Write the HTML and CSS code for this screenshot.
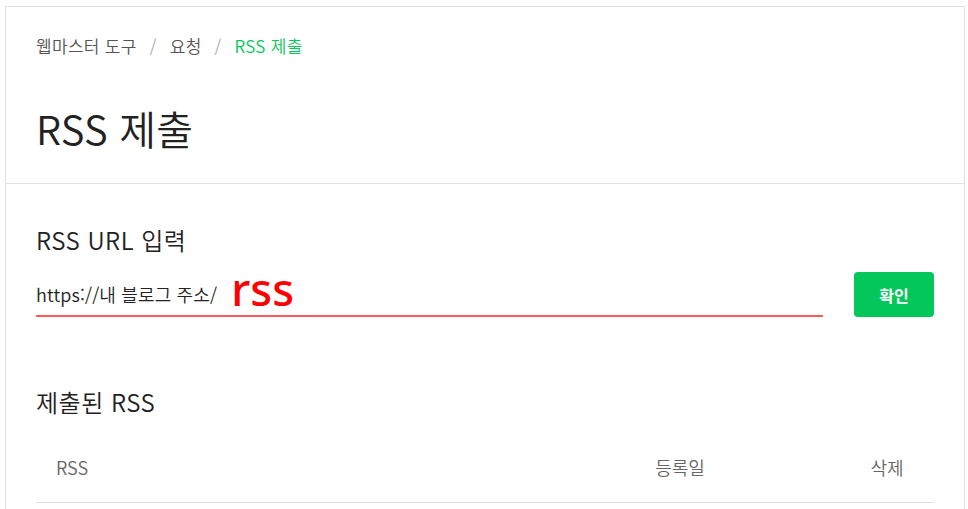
FILE: index.html
```html
<!DOCTYPE html>
<html lang="ko">
<head>
<meta charset="utf-8">
<title>RSS 제출</title>
<link rel="stylesheet" href="styles.css">
</head>
<body>
<div class="card">
  <header class="head">
    <nav class="crumbs">
      <span class="crumb">웹마스터 도구</span>
      <span class="sep">/</span>
      <span class="crumb">요청</span>
      <span class="sep">/</span>
      <span class="crumb current">RSS 제출</span>
    </nav>
    <h1 class="title">RSS 제출</h1>
  </header>
  <section class="body">
    <h2 class="label">RSS URL 입력</h2>
    <div class="row">
      <div class="field">
        <span class="value">https://내 블로그 주소/</span>
        <span class="annot">rss</span>
      </div>
      <button class="btn">확인</button>
    </div>
    <h2 class="label submitted">제출된 RSS</h2>
    <div class="table">
      <div class="th th-rss">RSS</div>
      <div class="th th-date">등록일</div>
      <div class="th th-del">삭제</div>
    </div>
  </section>
</div>
</body>
</html>
```
FILE: styles.css
```css
html, body {
  margin: 0;
  padding: 0;
  background: #fff;
}
body {
  font-family: "Noto Sans CJK KR", "Noto Sans", sans-serif;
  font-weight: 350;
  color: #222;
  padding: 6px 3px 0 5px;
}
.card {
  border: 1px solid #e2e2e2;
  border-bottom: none;
  min-height: 520px;
}
.head {
  padding: 27px 30px 30px;
  border-bottom: 1px solid #e2e2e2;
}
.crumbs {
  display: flex;
  align-items: center;
  font-size: 17px;
  line-height: 24px;
  letter-spacing: 0.3px;
  color: #555;
}
.sep {
  color: #aaa;
  margin: 0 13px;
}
.current {
  color: #03c75a;
}
.title {
  margin: 45px 0 0;
  font-size: 40px;
  line-height: 50px;
  letter-spacing: 0.2px;
  font-weight: 350;
  color: #222;
}
.body {
  padding: 40px 30px 0;
}
.label {
  margin: 0;
  font-size: 24px;
  line-height: 32px;
  letter-spacing: 0.5px;
  font-weight: 350;
  color: #222;
}
.row {
  display: flex;
  gap: 31px;
  margin-top: 16px;
  height: 45px;
}
.field {
  flex: 1;
  display: flex;
  align-items: center;
  border-bottom: 2px solid #ff5a5a;
  box-sizing: border-box;
}
.value {
  font-size: 18px;
  letter-spacing: 0.15px;
  color: #222;
}
.annot {
  margin-left: 14px;
  color: #ff0000;
  font-size: 45px;
  line-height: 40px;
  font-weight: 500;
  font-family: "Noto Sans", "DejaVu Sans", sans-serif;
  padding-bottom: 9px;
}
.btn {
  width: 80px;
  height: 45px;
  border: none;
  border-radius: 4px;
  background: #03c75a;
  color: #fff;
  font-family: "Noto Sans CJK KR", sans-serif;
  font-size: 16px;
  font-weight: 700;
}
.submitted {
  margin-top: 69px;
}
.table {
  display: grid;
  grid-template-columns: 1fr 320px 94px;
  margin-top: 14px;
  height: 70px;
  align-items: center;
  border-bottom: 1px solid #e2e2e2;
  font-size: 18px;
  color: #666;
}
.th-rss {
  padding-left: 20px;
}
.th-date, .th-del {
  text-align: center;
}
```
